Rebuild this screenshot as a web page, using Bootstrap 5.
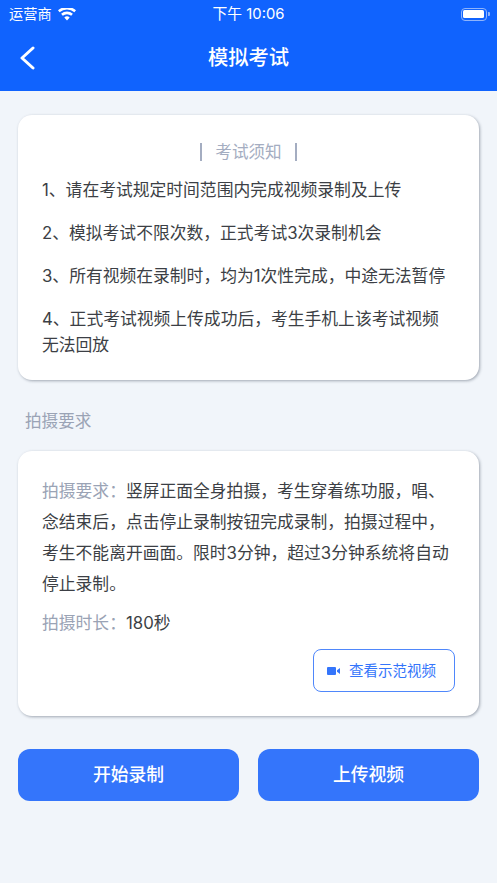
<!DOCTYPE html>
<html lang="zh-CN">
<head>
<meta charset="utf-8">
<title>模拟考试</title>
<link href="https://cdn.jsdelivr.net/npm/bootstrap@5.3.0/dist/css/bootstrap.min.css" rel="stylesheet">
<style>
html,body{height:883px;overflow:hidden}
body{background:#f1f5fa;font-family:Inter,"Noto Sans CJK SC",sans-serif;color:#3c3f45}
.top-area{background:#1063fe;height:91px;color:#fff}
.status-row{height:27px;padding:1px 7px 0 9px;font-size:14.2px;line-height:26px}
.status-side{width:120px}
.status-left{gap:6px}
.status-time{font-size:14.8px;margin-right:2px}
.bat-box{width:26px;height:13px;border:1.5px solid #8fb4fb;border-radius:4px;padding:1.5px}
.bat-fill{background:#fff;height:100%;border-radius:1.5px}
.bat-tip{width:2px;height:4px;background:#8fb4fb;margin-left:1px;border-radius:0 1px 1px 0}
.nav-row{height:64px;padding-bottom:1px}
.nav-title{font-size:20.3px;font-weight:500;line-height:1}
.back-link{position:absolute;left:19px;top:19px;line-height:0}
.page-body{padding:24px 18px 0}
.sheet{background:#fff;border-radius:14px;box-shadow:1px 1px 3px rgba(60,70,90,.45);border:0}
.notice-sheet{height:265px;padding:26px 24px 0}
.notice-head{color:#a4adc1;font-size:16.6px;line-height:22px;margin-bottom:15px;gap:12px}
.notice-bar{width:2px;height:18px;background:#a4adc1;margin:0 1px}
.rule-line{font-size:16.8px;line-height:25.5px;margin:0 0 17.5px}
.sec-label{color:#9aa3b5;font-size:16.6px;line-height:22px;margin:30px 0 19px 7px}
.req-sheet{height:265px;padding:25px 24px 0}
.req-line{font-size:16.8px;line-height:31px;margin:0 0 8px}
.req-key{color:#9aa3b5}
.demo-btn{width:142px;height:43px;border:1.5px solid #4f87fb;border-radius:8px;color:#3475fb;font-size:14.5px;background:#fff;padding:0 5px 0 0;margin-top:2px;gap:9px}
.demo-btn:hover{color:#3475fb;background:#fff;border-color:#4f87fb}
.act-row{margin-top:33px;gap:19px}
.act-btn{flex:1;height:52px;background:#3475fb;border:0;border-radius:12px;color:#fff;font-size:17.8px;font-weight:500;padding:0}
.act-btn:hover{background:#3475fb;color:#fff}
</style>
</head>
<body>
<header class="top-area">
  <div class="status-row d-flex align-items-center justify-content-between">
    <div class="status-side status-left d-flex align-items-center">
      <span>运营商</span>
      <svg width="18" height="13" viewBox="0 0 18 13" aria-hidden="true"><path d="M9 12.6 6.3 9.5a4 4 0 0 1 5.4 0Z M4.8 7.8 3.1 5.8a9 9 0 0 1 11.8 0l-1.7 2a6.4 6.4 0 0 0-8.4 0Z M1.6 4.2 0 2.3a13.6 13.6 0 0 1 18 0l-1.6 1.9a11.2 11.2 0 0 0-14.8 0Z" fill="#fff"/></svg>
    </div>
    <span class="status-time">下午 10:06</span>
    <div class="status-side d-flex align-items-center justify-content-end">
      <div class="bat-box"><div class="bat-fill"></div></div><div class="bat-tip"></div>
    </div>
  </div>
  <div class="nav-row position-relative d-flex align-items-center justify-content-center">
    <a class="back-link" href="#" aria-label="返回"><svg width="16" height="24" viewBox="0 0 16 24"><path d="M14 2 3 12l11 10" fill="none" stroke="#fff" stroke-width="3" stroke-linecap="round" stroke-linejoin="round"/></svg></a>
    <div class="nav-title">模拟考试</div>
  </div>
</header>
<main class="page-body">
  <section class="sheet notice-sheet">
    <div class="notice-head d-flex align-items-center justify-content-center"><span class="notice-bar"></span><span>考试须知</span><span class="notice-bar"></span></div>
    <p class="rule-line">1、请在考试规定时间范围内完成视频录制及上传</p>
    <p class="rule-line">2、模拟考试不限次数，正式考试3次录制机会</p>
    <p class="rule-line">3、所有视频在录制时，均为1次性完成，中途无法暂停</p>
    <p class="rule-line">4、正式考试视频上传成功后，考生手机上该考试视频无法回放</p>
  </section>
  <div class="sec-label">拍摄要求</div>
  <section class="sheet req-sheet">
    <p class="req-line"><span class="req-key">拍摄要求：</span>竖屏正面全身拍摄，考生穿着练功服，唱、念结束后，点击停止录制按钮完成录制，拍摄过程中，考生不能离开画面。限时3分钟，超过3分钟系统将自动停止录制。</p>
    <p class="req-line"><span class="req-key">拍摄时长：</span>180秒</p>
    <div class="d-flex justify-content-end">
      <button class="btn demo-btn d-flex align-items-center justify-content-center" type="button">
        <svg width="13" height="8" viewBox="0 0 13 8" aria-hidden="true"><rect width="9" height="8" rx="1" fill="#3475fb"/><path d="M10 3.2 13 1v6l-3-2.2Z" fill="#3475fb"/></svg>
        <span>查看示范视频</span>
      </button>
    </div>
  </section>
  <div class="act-row d-flex">
    <button class="btn act-btn" type="button">开始录制</button>
    <button class="btn act-btn" type="button">上传视频</button>
  </div>
</main>
<script src="https://cdn.jsdelivr.net/npm/bootstrap@5.3.0/dist/js/bootstrap.bundle.min.js"></script>
</body>
</html>
